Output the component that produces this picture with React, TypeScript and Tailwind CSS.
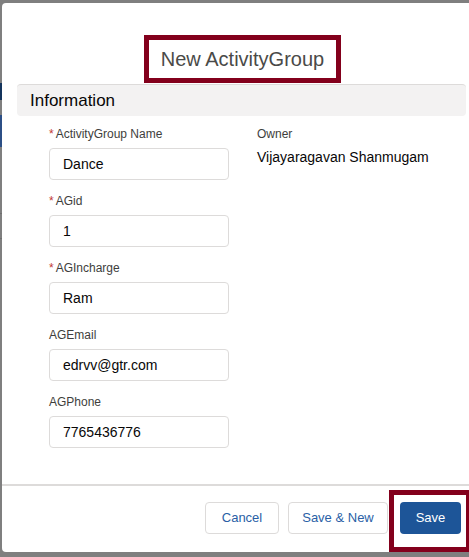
import React from 'react';

const font = { fontFamily: '"Liberation Sans", Arial, sans-serif' };

type Field = { label: string; value: string; required?: boolean };

const fields: Field[] = [
  { label: 'ActivityGroup Name', value: 'Dance', required: true },
  { label: 'AGid', value: '1', required: true },
  { label: 'AGIncharge', value: 'Ram', required: true },
  { label: 'AGEmail', value: 'edrvv@gtr.com' },
  { label: 'AGPhone', value: '7765436776' },
];

function FormField({ label, value, required }: Field) {
  return (
    <div className="mb-[14px]">
      <div className="h-[14px] flex items-center text-[12px] leading-[14px] text-[#3e3e3c]">
        {required && <span className="text-[#c23934] mr-[2px] text-[12px]">*</span>}
        {label}
      </div>
      <div className="mt-[7px] w-[180px] h-[32px] border border-[#dddbda] rounded-[4px] flex items-center pl-[13px] text-[14px] text-[#080707]">
        {value}
      </div>
    </div>
  );
}

export default function App() {
  return (
    <div className="w-[469px] h-[557px] bg-[#7f7f7f] flex overflow-hidden" style={font}>
      {/* page behind the overlay */}
      <div className="w-[2px] flex flex-col shrink-0">
        <div className="h-[83px]" />
        <div className="h-[17px] bg-[#14345c]" />
        <div className="h-[15px]" />
        <div className="h-[32px] bg-[#2c4f86]" />
        <div className="h-[66px]" />
        <div className="h-px bg-[#6f6f6f]" />
        <div className="h-[24px]" />
        <div className="h-px bg-[#6f6f6f]" />
      </div>

      <div className="relative mt-[3px] h-[549px] flex-1 bg-white rounded-l-[4px] flex flex-col">
        {/* header */}
        <div className="h-[81px] flex items-start justify-center pt-[32px] pl-[14px]">
          <div className="w-[197px] h-[48px] border-[5px] border-[#83001c] flex items-center justify-center text-[20px] text-[#4a4a48]">
            New ActivityGroup
          </div>
        </div>

        {/* body */}
        <div className="flex-1 ml-[15px] mr-[3px]">
          <div className="border-t border-[#dddbda] bg-[#f3f2f2] rounded-[4px] h-[32px] flex items-center pl-[13px] text-[17px] text-[#080707]">
            Information
          </div>
          <div className="flex mt-[11px] pl-[32px]">
            <div className="w-[208px]">
              {fields.map((f) => (
                <FormField key={f.label} {...f} />
              ))}
            </div>
            <div>
              <div className="h-[14px] text-[12px] leading-[14px] text-[#3e3e3c]">Owner</div>
              <div className="mt-[8px] text-[14px] leading-[16px] text-[#080707]">Vijayaragavan Shanmugam</div>
            </div>
          </div>
        </div>

        {/* footer */}
        <div className="h-[68px] border-t-2 border-[#dddbda] flex justify-end items-start pt-[16px] pr-[8px] gap-[9px]">
          <button className="w-[74px] h-[32px] border border-[#dddbda] rounded-[4px] text-[13px] text-[#2a5fa6] bg-white">
            Cancel
          </button>
          <button className="w-[100px] h-[32px] border border-[#dddbda] rounded-[4px] text-[13px] text-[#2a5fa6] bg-white">
            Save &amp; New
          </button>
          <button className="ml-[3px] w-[61px] h-[32px] rounded-[4px] text-[13px] text-white bg-[#1d5598]">
            Save
          </button>
        </div>

        {/* annotation around Save */}
        <div className="absolute left-[387px] top-[487px] w-[82px] h-[62px] border-[5px] border-[#83001c]" />
      </div>
    </div>
  );
}
